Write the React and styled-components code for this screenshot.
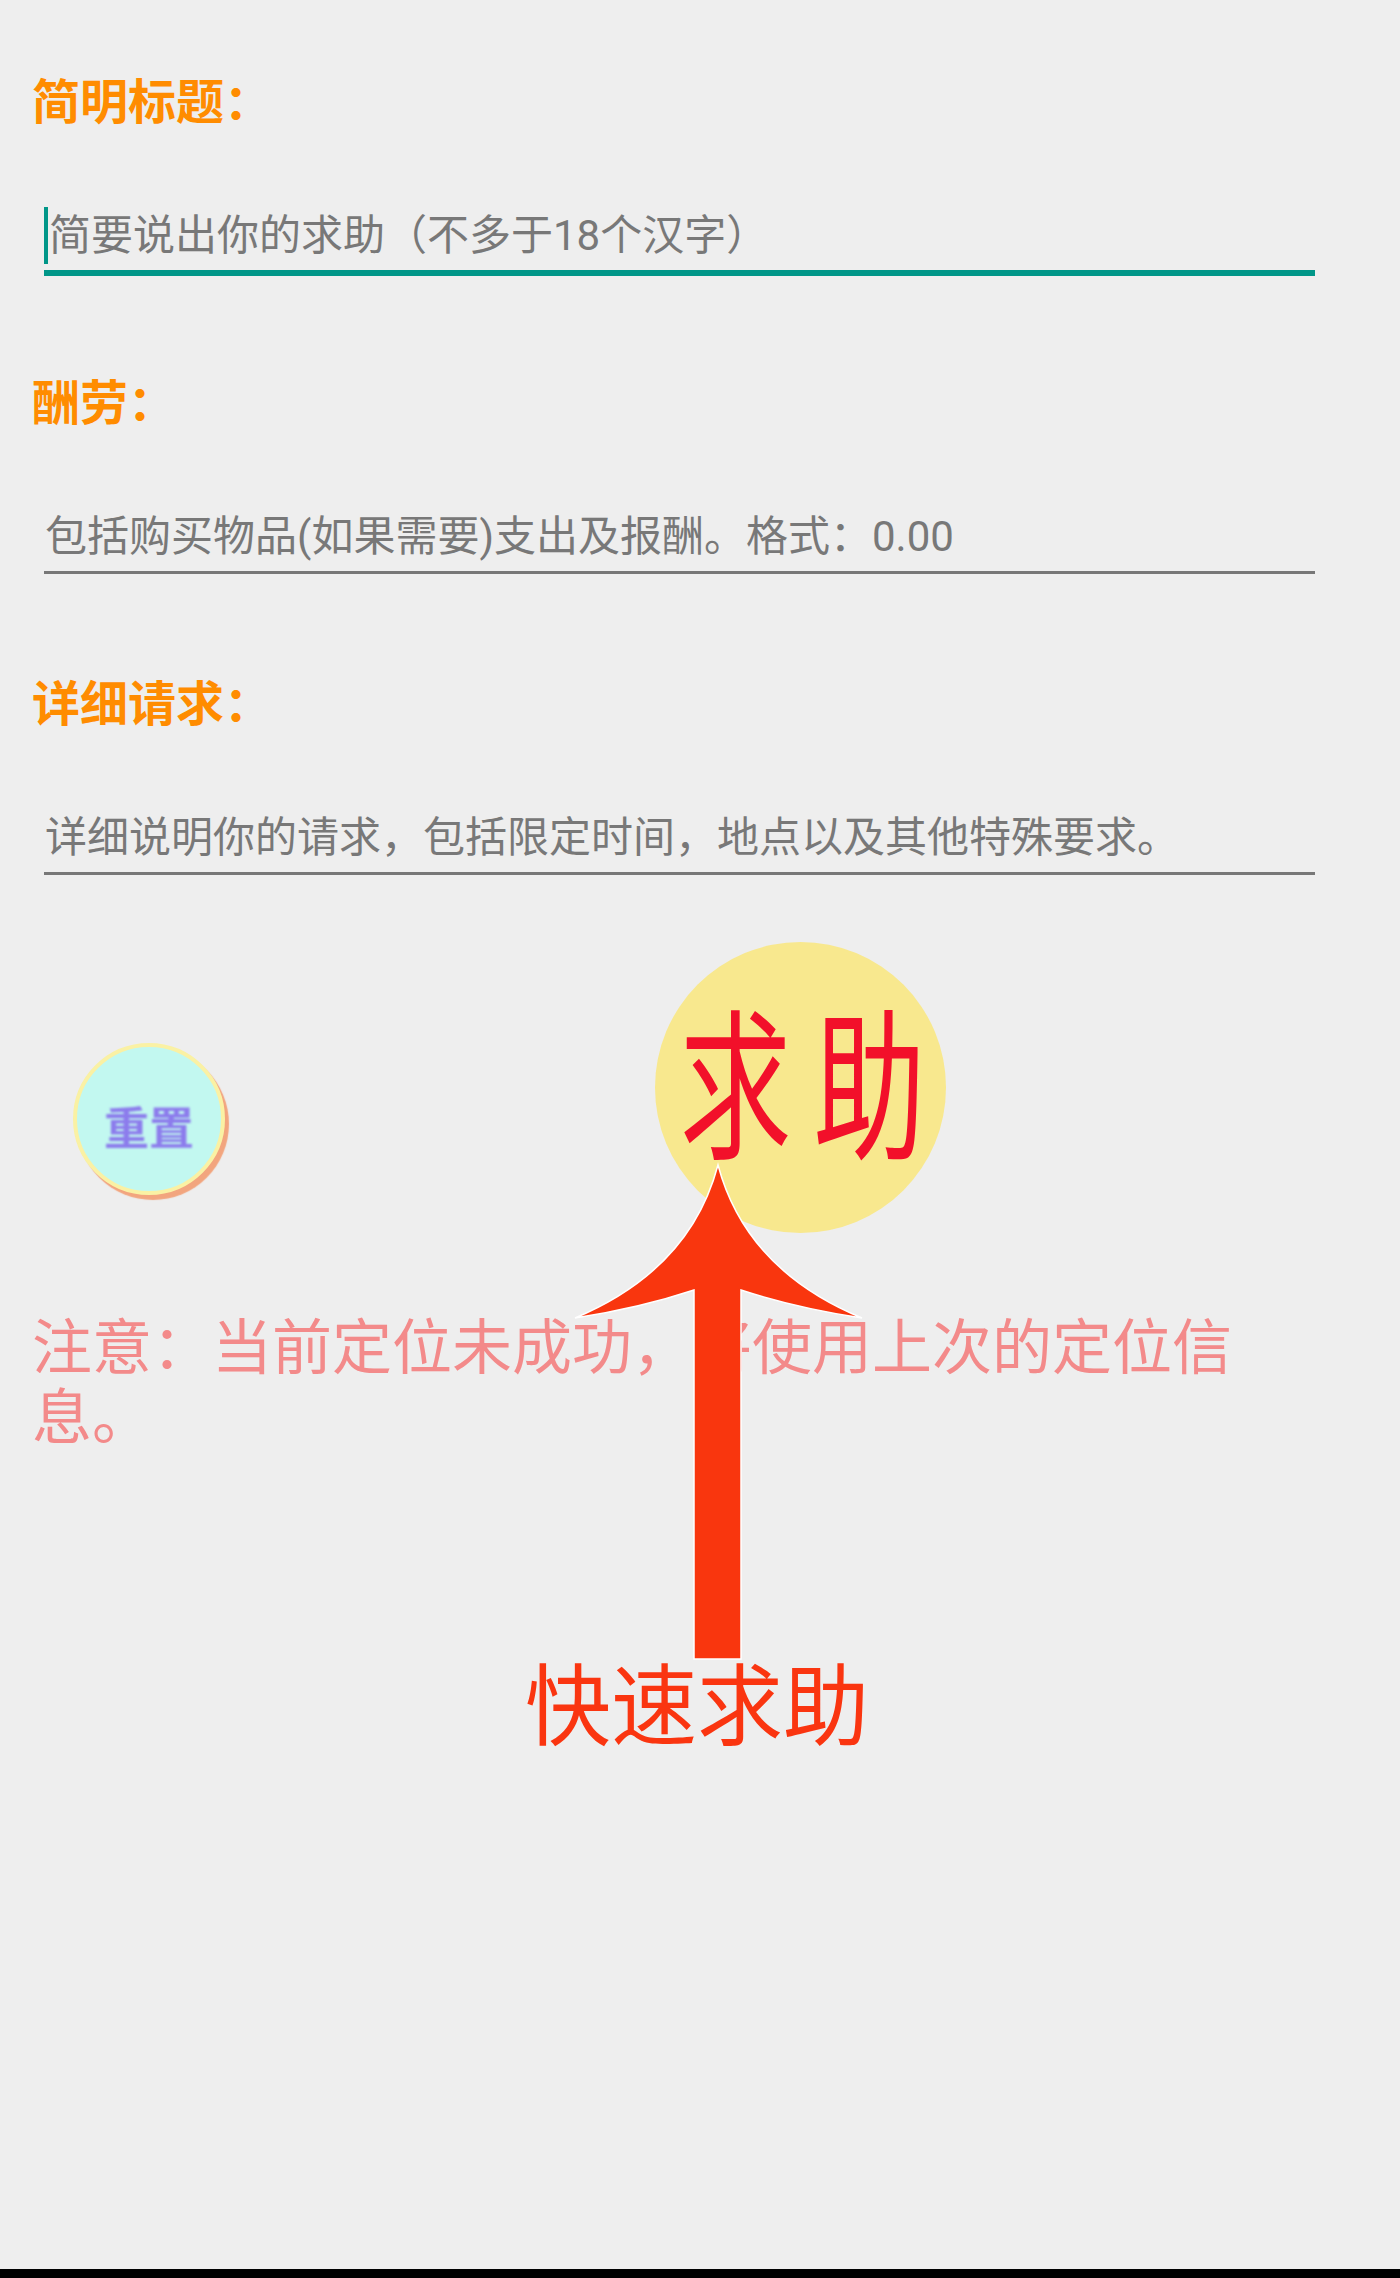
import React from "react";
import styled, { createGlobalStyle } from "styled-components";

const fields = [
  { label: "简明标题：", hint: "简要说出你的求助（不多于18个汉字）", focused: true },
  { label: "酬劳：", hint: "包括购买物品(如果需要)支出及报酬。格式：0.00" },
  { label: "详细请求：", hint: "详细说明你的请求，包括限定时间，地点以及其他特殊要求。" },
];

const GlobalStyle = createGlobalStyle`
  html, body {
    margin: 0;
    padding: 0;
    background: #eeeeee;
  }
  * {
    box-sizing: border-box;
  }
`;

export default function App() {
  return (
    <>
      <GlobalStyle />
      <Page>
        <Content>
          <Fields>
            {fields.map((field) => (
              <Field key={field.label}>
                <Label>{field.label}</Label>
                <InputRow>
                  {field.focused && <Caret />}
                  <Hint>{field.hint}</Hint>
                </InputRow>
                <Underline $focused={field.focused} />
              </Field>
            ))}
          </Fields>
          <ButtonRow>
            <ResetButton>
              <ResetText>重置</ResetText>
            </ResetButton>
            <HelpButton>
              <HelpText>
                <HelpChar>求</HelpChar>
                <HelpChar>助</HelpChar>
              </HelpText>
            </HelpButton>
          </ButtonRow>
          <Notice>注意：当前定位未成功，将使用上次的定位信息。</Notice>
        </Content>
        <BottomBar />

        {/* annotation drawn on top of the screen */}
        <ArrowLayer viewBox="0 0 1400 2278">
          <path
            d="M718,1165 Q690,1270 575,1318 Q640,1308 694,1290 L694,1659 L741,1659 L741,1290 Q796,1308 862,1318 Q746,1270 718,1165 Z"
            fill="#f9360e"
            stroke="#ffffff"
            strokeWidth="1.5"
          />
        </ArrowLayer>
        <Caption>快速求助</Caption>
      </Page>
    </>
  );
}

const Page = styled.div`
  position: relative;
  width: 1400px;
  height: 2278px;
  display: flex;
  flex-direction: column;
  background: #eeeeee;
  font-family: Roboto, "Noto Sans CJK SC", sans-serif;
  overflow: hidden;
`;

const Content = styled.div`
  flex: 1;
  padding: 79px 0 0 32px;
`;

const Fields = styled.div`
  display: flex;
  flex-direction: column;
  gap: 104px;
`;

const Field = styled.div`
  display: flex;
  flex-direction: column;
`;

const Label = styled.div`
  font-size: 48px;
  line-height: 48px;
  height: 48px;
  font-weight: 700;
  color: #ff8c00;
`;

const InputRow = styled.div`
  display: flex;
  align-items: center;
  height: 57px;
  margin: 80px 0 0 12px;
`;

const Caret = styled.span`
  width: 4px;
  height: 57px;
  background: #009688;
`;

const Hint = styled.div`
  font-size: 42px;
  line-height: 42px;
  color: #787878;
  white-space: nowrap;
  padding-left: 1px;
`;

const Underline = styled.div`
  width: 1271px;
  margin: 6px 0 ${(p) => (p.$focused ? 0 : 3)}px 12px;
  height: ${(p) => (p.$focused ? 6 : 3)}px;
  background: ${(p) => (p.$focused ? "#009688" : "#777777")};
`;

const ButtonRow = styled.div`
  display: flex;
  align-items: flex-start;
  margin-top: 64px;
  padding-left: 41px;
  height: 290px;
`;

const ResetButton = styled.div`
  width: 152px;
  height: 152px;
  margin-top: 101px;
  border-radius: 50%;
  background: #c2f8f0;
  border: 4px solid #faf1a4;
  box-shadow: 4px 5px 1px #f2a57e;
  display: flex;
  align-items: center;
  justify-content: center;
  padding-top: 12px;
`;

const ResetText = styled.span`
  font-family: "Noto Sans CJK SC", sans-serif;
  font-size: 45px;
  line-height: 45px;
  font-weight: 700;
  color: #8c7cec;
  filter: blur(0.9px);
`;

const HelpButton = styled.div`
  width: 291px;
  height: 291px;
  margin-left: 430px;
  border-radius: 50%;
  background: #f8e88e;
  display: flex;
  align-items: center;
  justify-content: center;
`;

const HelpText = styled.div`
  display: flex;
  gap: 22px;
  transform: translate(2px, -12px) scaleY(1.45);
`;

const HelpChar = styled.span`
  font-family: "Noto Sans CJK SC", sans-serif;
  font-size: 112px;
  line-height: 112px;
  font-weight: 400;
  color: #f2102a;
`;

const Notice = styled.div`
  margin-top: 82px;
  width: 1230px;
  font-size: 60px;
  line-height: 70px;
  color: #f38a8a;
`;

const BottomBar = styled.div`
  height: 9px;
  background: #000000;
`;

const ArrowLayer = styled.svg`
  position: absolute;
  left: 0;
  top: 0;
  width: 1400px;
  height: 2278px;
  pointer-events: none;
`;

const Caption = styled.div`
  position: absolute;
  left: 525px;
  top: 1656px;
  font-family: "Noto Sans CJK SC", sans-serif;
  font-size: 86px;
  line-height: 86px;
  color: #fa3510;
  white-space: nowrap;
  transform-origin: top left;
  transform: scaleY(1.03);
`;
